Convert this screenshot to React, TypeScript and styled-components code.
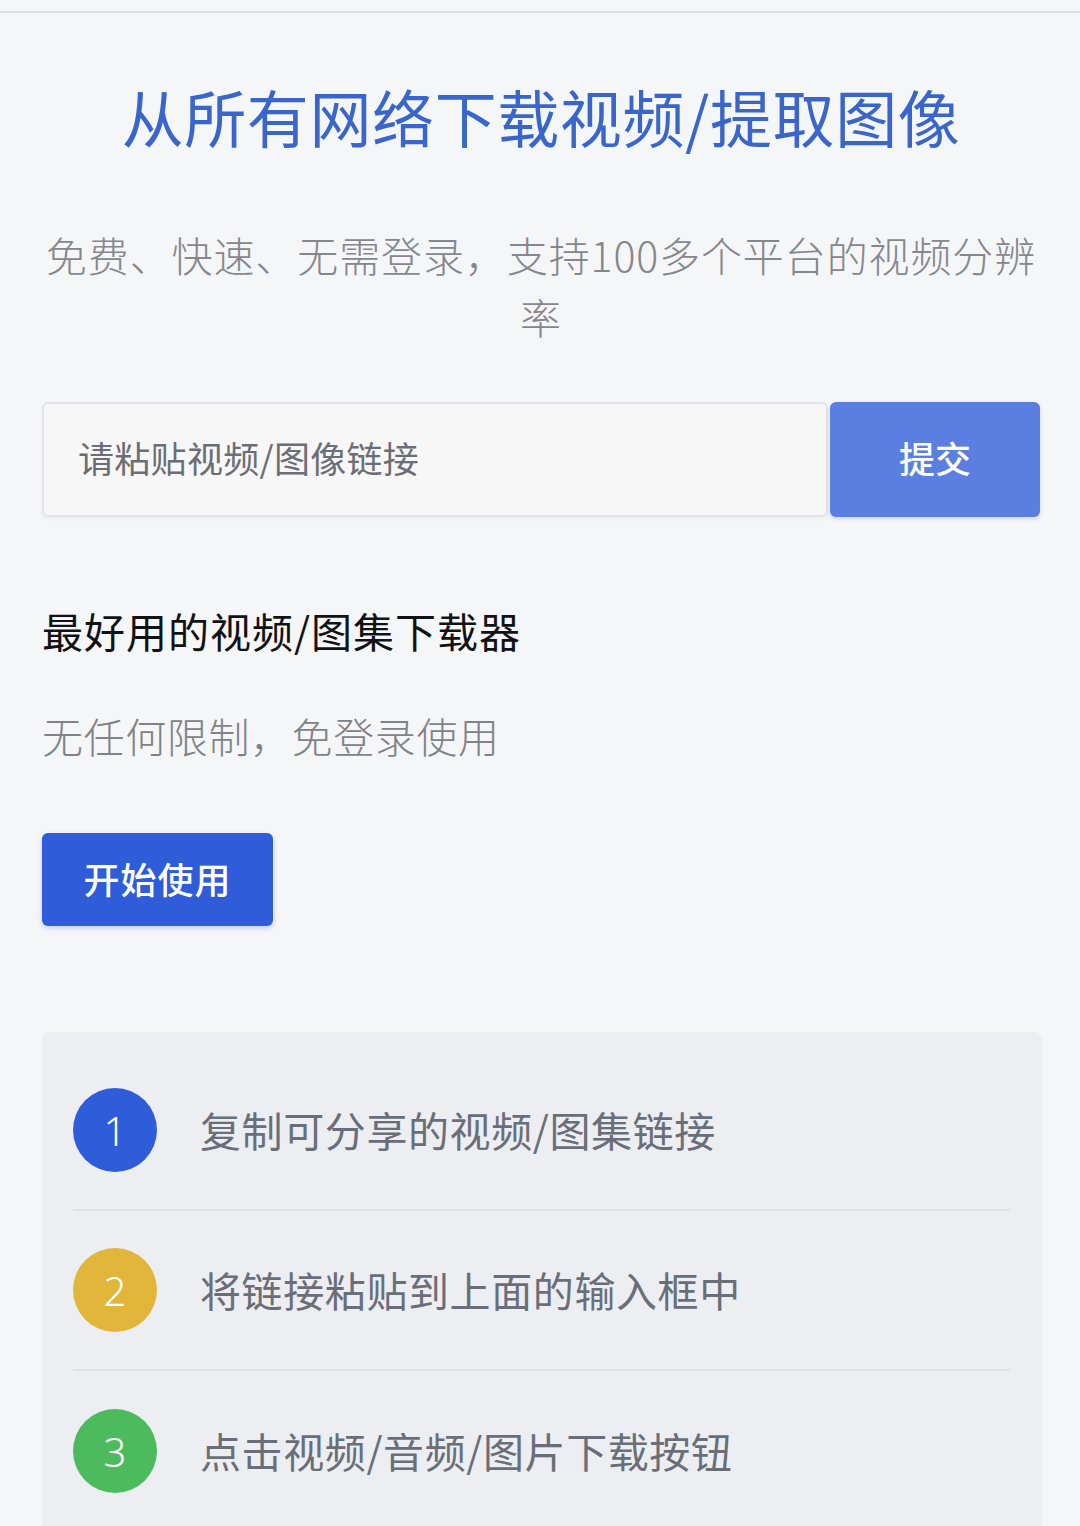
import React from "react";
import styled, { createGlobalStyle } from "styled-components";

const Global = createGlobalStyle`
  html, body { margin: 0; padding: 0; background: #f5f6f8; }
  body { font-family: "Noto Sans CJK SC", "Noto Sans", sans-serif; }
  * { box-sizing: border-box; }
`;

const TopBar = styled.div`
  height: 13px;
  border-bottom: 2px solid #dcdee2;
`;

const Main = styled.main`
  padding: 0 40px 0 42px;
  display: flex;
  flex-direction: column;
`;

const Title = styled.h1`
  margin: 63px 0 0;
  text-align: center;
  font-size: 62px;
  line-height: 80px;
  font-weight: 400;
  color: #3a66cb;
  letter-spacing: 0.6px;
`;

const Subtitle = styled.p`
  margin: 67px 0 0;
  text-align: center;
  font-size: 41px;
  line-height: 62px;
  font-weight: 300;
  color: #85878c;
  letter-spacing: 0.9px;
`;

const SearchRow = styled.form`
  margin-top: 55px;
  display: flex;
  height: 115px;
  gap: 2px;
`;

const UrlInput = styled.input`
  flex: 1;
  min-width: 0;
  height: 100%;
  border: 2px solid #e2e3e6;
  border-radius: 6px;
  background: #f7f7f8;
  padding: 0 34px 6px;
  font-family: inherit;
  font-size: 36px;
  color: #333;
  outline: none;
  box-shadow: 0 2px 4px rgba(0, 0, 0, 0.04);
  letter-spacing: 0.3px;
  &::placeholder { color: #6b6e74; }
`;

const SubmitButton = styled.button`
  width: 210px;
  height: 100%;
  border: none;
  border-radius: 6px;
  background: #5a7fe0;
  color: #fff;
  font-family: inherit;
  font-size: 36px;
  font-weight: 500;
  padding-bottom: 6px;
  box-shadow: 0 2px 4px rgba(60, 90, 180, 0.2);
`;

const SectionHeading = styled.h2`
  margin: 85px 0 0;
  font-size: 41px;
  line-height: 56px;
  font-weight: 400;
  color: #111214;
  letter-spacing: 1px;
`;

const SectionText = styled.p`
  margin: 49px 0 0;
  font-size: 41px;
  line-height: 56px;
  font-weight: 300;
  color: #808287;
  letter-spacing: 0.6px;
`;

const StartButton = styled.button`
  margin-top: 70px;
  align-self: flex-start;
  width: 231px;
  height: 93px;
  border: none;
  border-radius: 6px;
  background: #2f5cd9;
  color: #fff;
  font-family: inherit;
  font-size: 36px;
  font-weight: 500;
  letter-spacing: 1px;
  padding-bottom: 4px;
  box-shadow: 0 2px 5px rgba(40, 80, 200, 0.25);
`;

const StepsCard = styled.section`
  margin-top: 106px;
  margin-right: -2px;
  background: #eceef2;
  border-radius: 8px 8px 0 0;
  padding: 19px 32px 0 31px;
  min-height: 520px;
`;

const StepRow = styled.div<{ $last?: boolean }>`
  height: 160px;
  display: flex;
  align-items: center;
  gap: 43px;
  border-bottom: ${(p) => (p.$last ? "none" : "2px solid #dfe1e6")};
`;

const StepNumber = styled.div<{ $color: string }>`
  width: 84px;
  height: 84px;
  flex: none;
  border-radius: 50%;
  background: ${(p) => p.$color};
  color: #fff;
  display: flex;
  align-items: center;
  justify-content: center;
  font-family: "Noto Sans", sans-serif;
  font-size: 40px;
  font-weight: 300;
`;

const StepText = styled.span`
  font-size: 41px;
  font-weight: 400;
  color: #6a6e78;
  letter-spacing: 0.6px;
  padding-bottom: 2px;
`;

const steps = [
  { n: 1, color: "#2f5cd9", text: "复制可分享的视频/图集链接" },
  { n: 2, color: "#e2b63b", text: "将链接粘贴到上面的输入框中" },
  { n: 3, color: "#4cbb5e", text: "点击视频/音频/图片下载按钮" },
];

export default function App() {
  return (
    <>
      <Global />
      <TopBar />
      <Main>
        <Title>从所有网络下载视频/提取图像</Title>
        <Subtitle>免费、快速、无需登录，支持100多个平台的视频分辨率</Subtitle>
        <SearchRow onSubmit={(e) => e.preventDefault()}>
          <UrlInput placeholder="请粘贴视频/图像链接" />
          <SubmitButton type="submit">提交</SubmitButton>
        </SearchRow>
        <SectionHeading>最好用的视频/图集下载器</SectionHeading>
        <SectionText>无任何限制，免登录使用</SectionText>
        <StartButton type="button">开始使用</StartButton>
        <StepsCard>
          {steps.map((s, i) => (
            <StepRow key={s.n} $last={i === steps.length - 1}>
              <StepNumber $color={s.color}>{s.n}</StepNumber>
              <StepText>{s.text}</StepText>
            </StepRow>
          ))}
        </StepsCard>
      </Main>
    </>
  );
}
